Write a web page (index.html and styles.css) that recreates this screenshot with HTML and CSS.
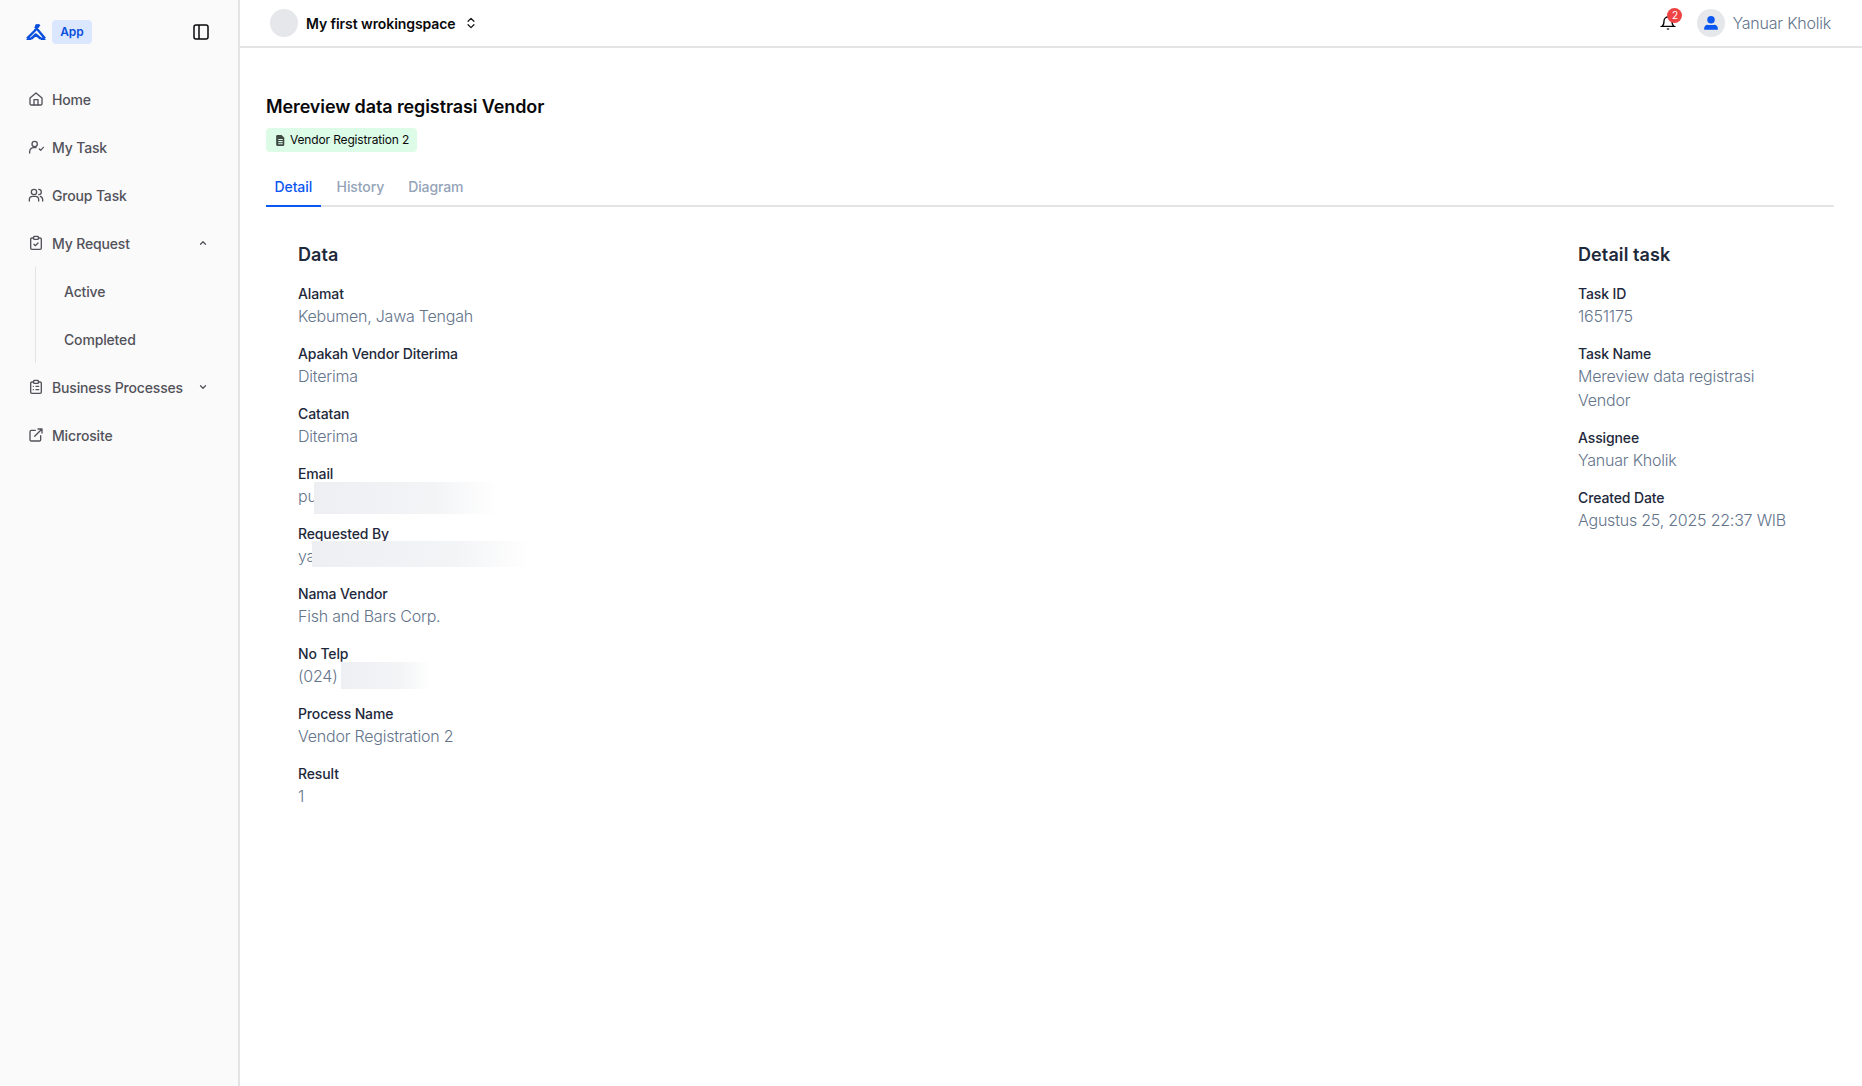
FILE: index.html
```html
<!DOCTYPE html>
<html lang="en">
<head>
<meta charset="utf-8">
<title>Mereview data registrasi Vendor</title>
<link rel="stylesheet" href="styles.css">
</head>
<body>
<div class="app">
  <aside class="sidebar">
    <div class="brand">
      <svg class="logo" viewBox="0 0 20 18"><path d="M1 15.500 8.500 8 13.500 1.500M9 3.500 19 15.500M5.500 15.500 9.800 11.500 14.500 15.500M0.500 15.800H5.500M14.500 15.800H19.500" fill="none" stroke="#0b4fdc" stroke-width="2.400" stroke-linejoin="round"/><circle cx="11" cy="3" r="2" fill="#0b4fdc"/></svg>
      <span class="app-chip">App</span>
      <svg class="toggle" viewBox="0 0 16 16" fill="none" stroke="#09090b" stroke-width="1.500"><rect x="1" y="1" width="14" height="14" rx="2"/><path d="M6 1v14"/></svg>
    </div>
    <nav class="nav">
      <a class="nav-item"><svg class="ico" viewBox="0 0 24 24"><path d="M3 10.500 12 3l9 7.500V19a2 2 0 0 1-2 2H5a2 2 0 0 1-2-2z"/><path d="M9 21v-8h6v8"/></svg>Home</a>
      <a class="nav-item"><svg class="ico" viewBox="0 0 24 24"><circle cx="10" cy="7.500" r="4"/><path d="M2.500 21v-2a6 6 0 0 1 6-6H12"/><path d="m17 15 2 2 4-4.500"/></svg>My Task</a>
      <a class="nav-item"><svg class="ico" viewBox="0 0 24 24"><circle cx="9" cy="7.500" r="4"/><path d="M2 21v-2a5 5 0 0 1 5-5h4a5 5 0 0 1 5 5v2"/><path d="M16 3.500a4 4 0 0 1 0 8"/><path d="M22 21v-2a5 5 0 0 0-3.500-4.800"/></svg>Group Task</a>
      <a class="nav-item"><svg class="ico" viewBox="0 0 24 24"><rect x="4" y="4.500" width="16" height="17" rx="2"/><rect x="8.500" y="2" width="7" height="4.500" rx="1" fill="#fafafa"/><path d="m9 14 2 2 4-4"/></svg><span class="nav-label">My Request</span><svg class="chev" viewBox="0 0 24 24"><path d="m6 15 6-6 6 6"/></svg></a>
      <div class="subnav">
        <a class="nav-item sub">Active</a>
        <a class="nav-item sub">Completed</a>
      </div>
      <a class="nav-item"><svg class="ico" viewBox="0 0 24 24"><rect x="4" y="4.500" width="16" height="17" rx="2"/><rect x="8.500" y="2" width="7" height="4.500" rx="1" fill="#fafafa"/><path d="M8 11h.01M12 11h4M8 16h.01M12 16h4"/></svg><span class="nav-label">Business Processes</span><svg class="chev" viewBox="0 0 24 24"><path d="m6 9 6 6 6-6"/></svg></a>
      <a class="nav-item"><svg class="ico" viewBox="0 0 24 24"><path d="M11 5H5a2 2 0 0 0-2 2v12a2 2 0 0 0 2 2h12a2 2 0 0 0 2-2v-6"/><path d="M10 14 21 3M15 3h6v6"/></svg>Microsite</a>
    </nav>
  </aside>
  <div class="main">
    <header class="topbar">
      <span class="ws-avatar"></span>
      <strong class="ws-name">My first wrokingspace</strong>
      <svg class="updown" viewBox="0 0 24 24"><path d="m7 9 5-5 5 5M7 15l5 5 5-5"/></svg>
      <div class="top-right">
        <span class="bell">
          <svg viewBox="0 0 24 24" fill="none" stroke="#09090b" stroke-width="2"><path d="M6 9a6 6 0 0 1 12 0c0 6 3 8 3 8H3s3-2 3-8"/><path d="M10.500 20.500a2 2 0 0 0 3 0"/></svg>
          <span class="bell-badge">2</span>
        </span>
        <span class="user-avatar"><svg viewBox="0 0 24 24" fill="#0b57f0"><circle cx="12" cy="7.500" r="5"/><path d="M3 21a5 5 0 0 1 5-6.500h8a5 5 0 0 1 5 6.500z"/></svg></span>
        <span class="user-name">Yanuar Kholik</span>
      </div>
    </header>
    <main class="content">
      <h1 class="title">Mereview data registrasi Vendor</h1>
      <span class="badge"><svg viewBox="0 0 24 24"><path d="M6 2h8l5 5v13a2 2 0 0 1-2 2H6a2 2 0 0 1-2-2V4a2 2 0 0 1 2-2z" fill="#3f4a45"/><path d="M8 10h8M8 14h8M8 18h8" stroke="#dcfce7" stroke-width="2"/></svg>Vendor Registration 2</span>
      <div class="tabs">
        <a class="tab active">Detail</a>
        <a class="tab">History</a>
        <a class="tab">Diagram</a>
      </div>
      <div class="panels">
        <section class="panel">
          <h2>Data</h2>
          <dl>
            <div class="field"><dt>Alamat</dt><dd>Kebumen, Jawa Tengah</dd></div>
            <div class="field"><dt>Apakah Vendor Diterima</dt><dd>Diterima</dd></div>
            <div class="field"><dt>Catatan</dt><dd>Diterima</dd></div>
            <div class="field"><dt>Email</dt><dd class="masked">pu<span class="blur blur-email"></span></dd></div>
            <div class="field"><dt>Requested By</dt><dd class="masked">ya<span class="blur blur-req"></span></dd></div>
            <div class="field"><dt>Nama Vendor</dt><dd>Fish and Bars Corp.</dd></div>
            <div class="field"><dt>No Telp</dt><dd class="masked">(024) <span class="blur blur-tel"></span></dd></div>
            <div class="field"><dt>Process Name</dt><dd>Vendor Registration 2</dd></div>
            <div class="field"><dt>Result</dt><dd>1</dd></div>
          </dl>
        </section>
        <section class="panel side">
          <h2>Detail task</h2>
          <dl>
            <div class="field"><dt>Task ID</dt><dd>1651175</dd></div>
            <div class="field"><dt>Task Name</dt><dd>Mereview data registrasi Vendor</dd></div>
            <div class="field"><dt>Assignee</dt><dd>Yanuar Kholik</dd></div>
            <div class="field"><dt>Created Date</dt><dd>Agustus 25, 2025 22:37 WIB</dd></div>
          </dl>
        </section>
      </div>
    </main>
  </div>
</div>
</body>
</html>
```
FILE: styles.css
```css
* { box-sizing: border-box; }
html, body { margin: 0; height: 100%; }
body { font-family: Inter, "Liberation Sans", sans-serif; background: #fff; color: #09090b; overflow: hidden; }
a { text-decoration: none; color: inherit; }
.app { display: flex; height: 1086px; }
.sidebar { width: 240px; flex: none; background: #fafafa; border-right: 2px solid #e4e4e7; }
.brand { display: flex; align-items: center; height: 64px; padding: 0 29px 0 26px; }
.logo { width: 20px; height: 18px; }
.app-chip { margin-left: 6px; width: 40px; height: 24px; border-radius: 4px; background: #dbe7ff; color: #0b4fdc; font-size: 12px; font-weight: 600; line-height: 24px; text-align: center; }
.toggle { width: 16px; height: 16px; margin-left: auto; }
.nav { display: flex; flex-direction: column; padding-top: 11px; }
.nav-item { display: flex; align-items: center; height: 48px; padding: 0 28px; font-size: 14px; font-weight: 500; letter-spacing: -0.16px; color: #52525b; }
.ico { width: 16px; height: 16px; margin-right: 8px; fill: none; stroke: #52525b; stroke-width: 2; stroke-linecap: round; stroke-linejoin: round; flex: none; }
.nav-label { flex: 1; }
.chev { width: 10px; height: 10px; margin-right: 2px; fill: none; stroke: #52525b; stroke-width: 3; stroke-linecap: round; stroke-linejoin: round; }
.subnav { margin-left: 35px; border-left: 1px solid #e4e4e7; }
.nav-item.sub { padding-left: 28px; }
.main { flex: 1; min-width: 0; display: flex; flex-direction: column; }
.topbar { display: flex; align-items: center; height: 48px; flex: none; padding: 0 31px 0 30px; border-bottom: 2px solid #e4e4e7; }
.ws-avatar { width: 28px; height: 28px; border-radius: 50%; background: #e5e7eb; }
.ws-name { margin-left: 8px; font-size: 14px; font-weight: 600; letter-spacing: -0.08px; }
.updown { width: 14px; height: 14px; margin-left: 8px; fill: none; stroke: #18181b; stroke-width: 2.200; stroke-linecap: round; stroke-linejoin: round; }
.top-right { margin-left: auto; display: flex; align-items: center; }
.bell { position: relative; width: 16px; height: 16px; display: block; margin-right: 21px; }
.bell svg { display: block; width: 16px; height: 16px; }
.bell-badge { position: absolute; top: -7px; left: 7px; width: 15px; height: 15px; border-radius: 50%; background: #ef4444; color: #fff; font-size: 10px; line-height: 15px; text-align: center; }
.user-avatar { width: 28px; height: 28px; border-radius: 50%; background: #e5e7eb; display: flex; align-items: center; justify-content: center; }
.user-avatar svg { width: 18px; height: 18px; }
.user-name { margin-left: 7px; font-size: 16px; font-weight: 300; letter-spacing: -0.22px; color: #64748b; }
.content { flex: 1; padding: 45px 28px 0 26px; }
.title { margin: 0; font-size: 18px; line-height: 28px; font-weight: 600; letter-spacing: -0.11px; }
.badge { display: inline-flex; align-items: center; margin-top: 7px; height: 24px; padding: 0 8px; border-radius: 4px; background: #dcfce7; font-size: 12px; line-height: 16px; letter-spacing: -0.15px; }
.badge svg { width: 13px; height: 13px; margin-right: 3px; }
.tabs { display: flex; height: 37px; margin-top: 18px; border-bottom: 2px solid #e4e4e7; }
.tab { display: block; height: 37px; padding: 0 8px; margin-right: 8px; line-height: 33px; font-size: 14px; font-weight: 500; letter-spacing: -0.1px; color: #94a3b8; }
.tab.active { color: #0b57f0; border-bottom: 2px solid #0b57f0; padding: 0 8.500px; margin-right: 8px; }
.panels { display: flex; justify-content: space-between; padding: 34px 32px 0; }
.panel { flex: 1; }
.panel.side { flex: none; width: 224px; }
.panel h2 { margin: 0; font-size: 18px; line-height: 28px; font-weight: 600; letter-spacing: 0.1px; color: #1e293b; }
dl { margin: 15px 0 0; }
.field { margin-bottom: 16px; }
dt { font-size: 14px; line-height: 20px; font-weight: 500; letter-spacing: -0.13px; color: #1e293b; }
dd { margin: 0; font-size: 16px; line-height: 24px; font-weight: 300; letter-spacing: -0.22px; color: #64748b; }
.masked { position: relative; }
.blur { position: absolute; display: block; background: linear-gradient(90deg, #eeeff2, #f3f4f6 65%, #fff); }
.blur-email { left: 16px; top: -2px; width: 184px; height: 32px; }
.blur-req { left: 14px; top: -3px; width: 218px; height: 26px; }
.blur-tel { left: 43px; top: -2px; width: 90px; height: 27px; }
```
